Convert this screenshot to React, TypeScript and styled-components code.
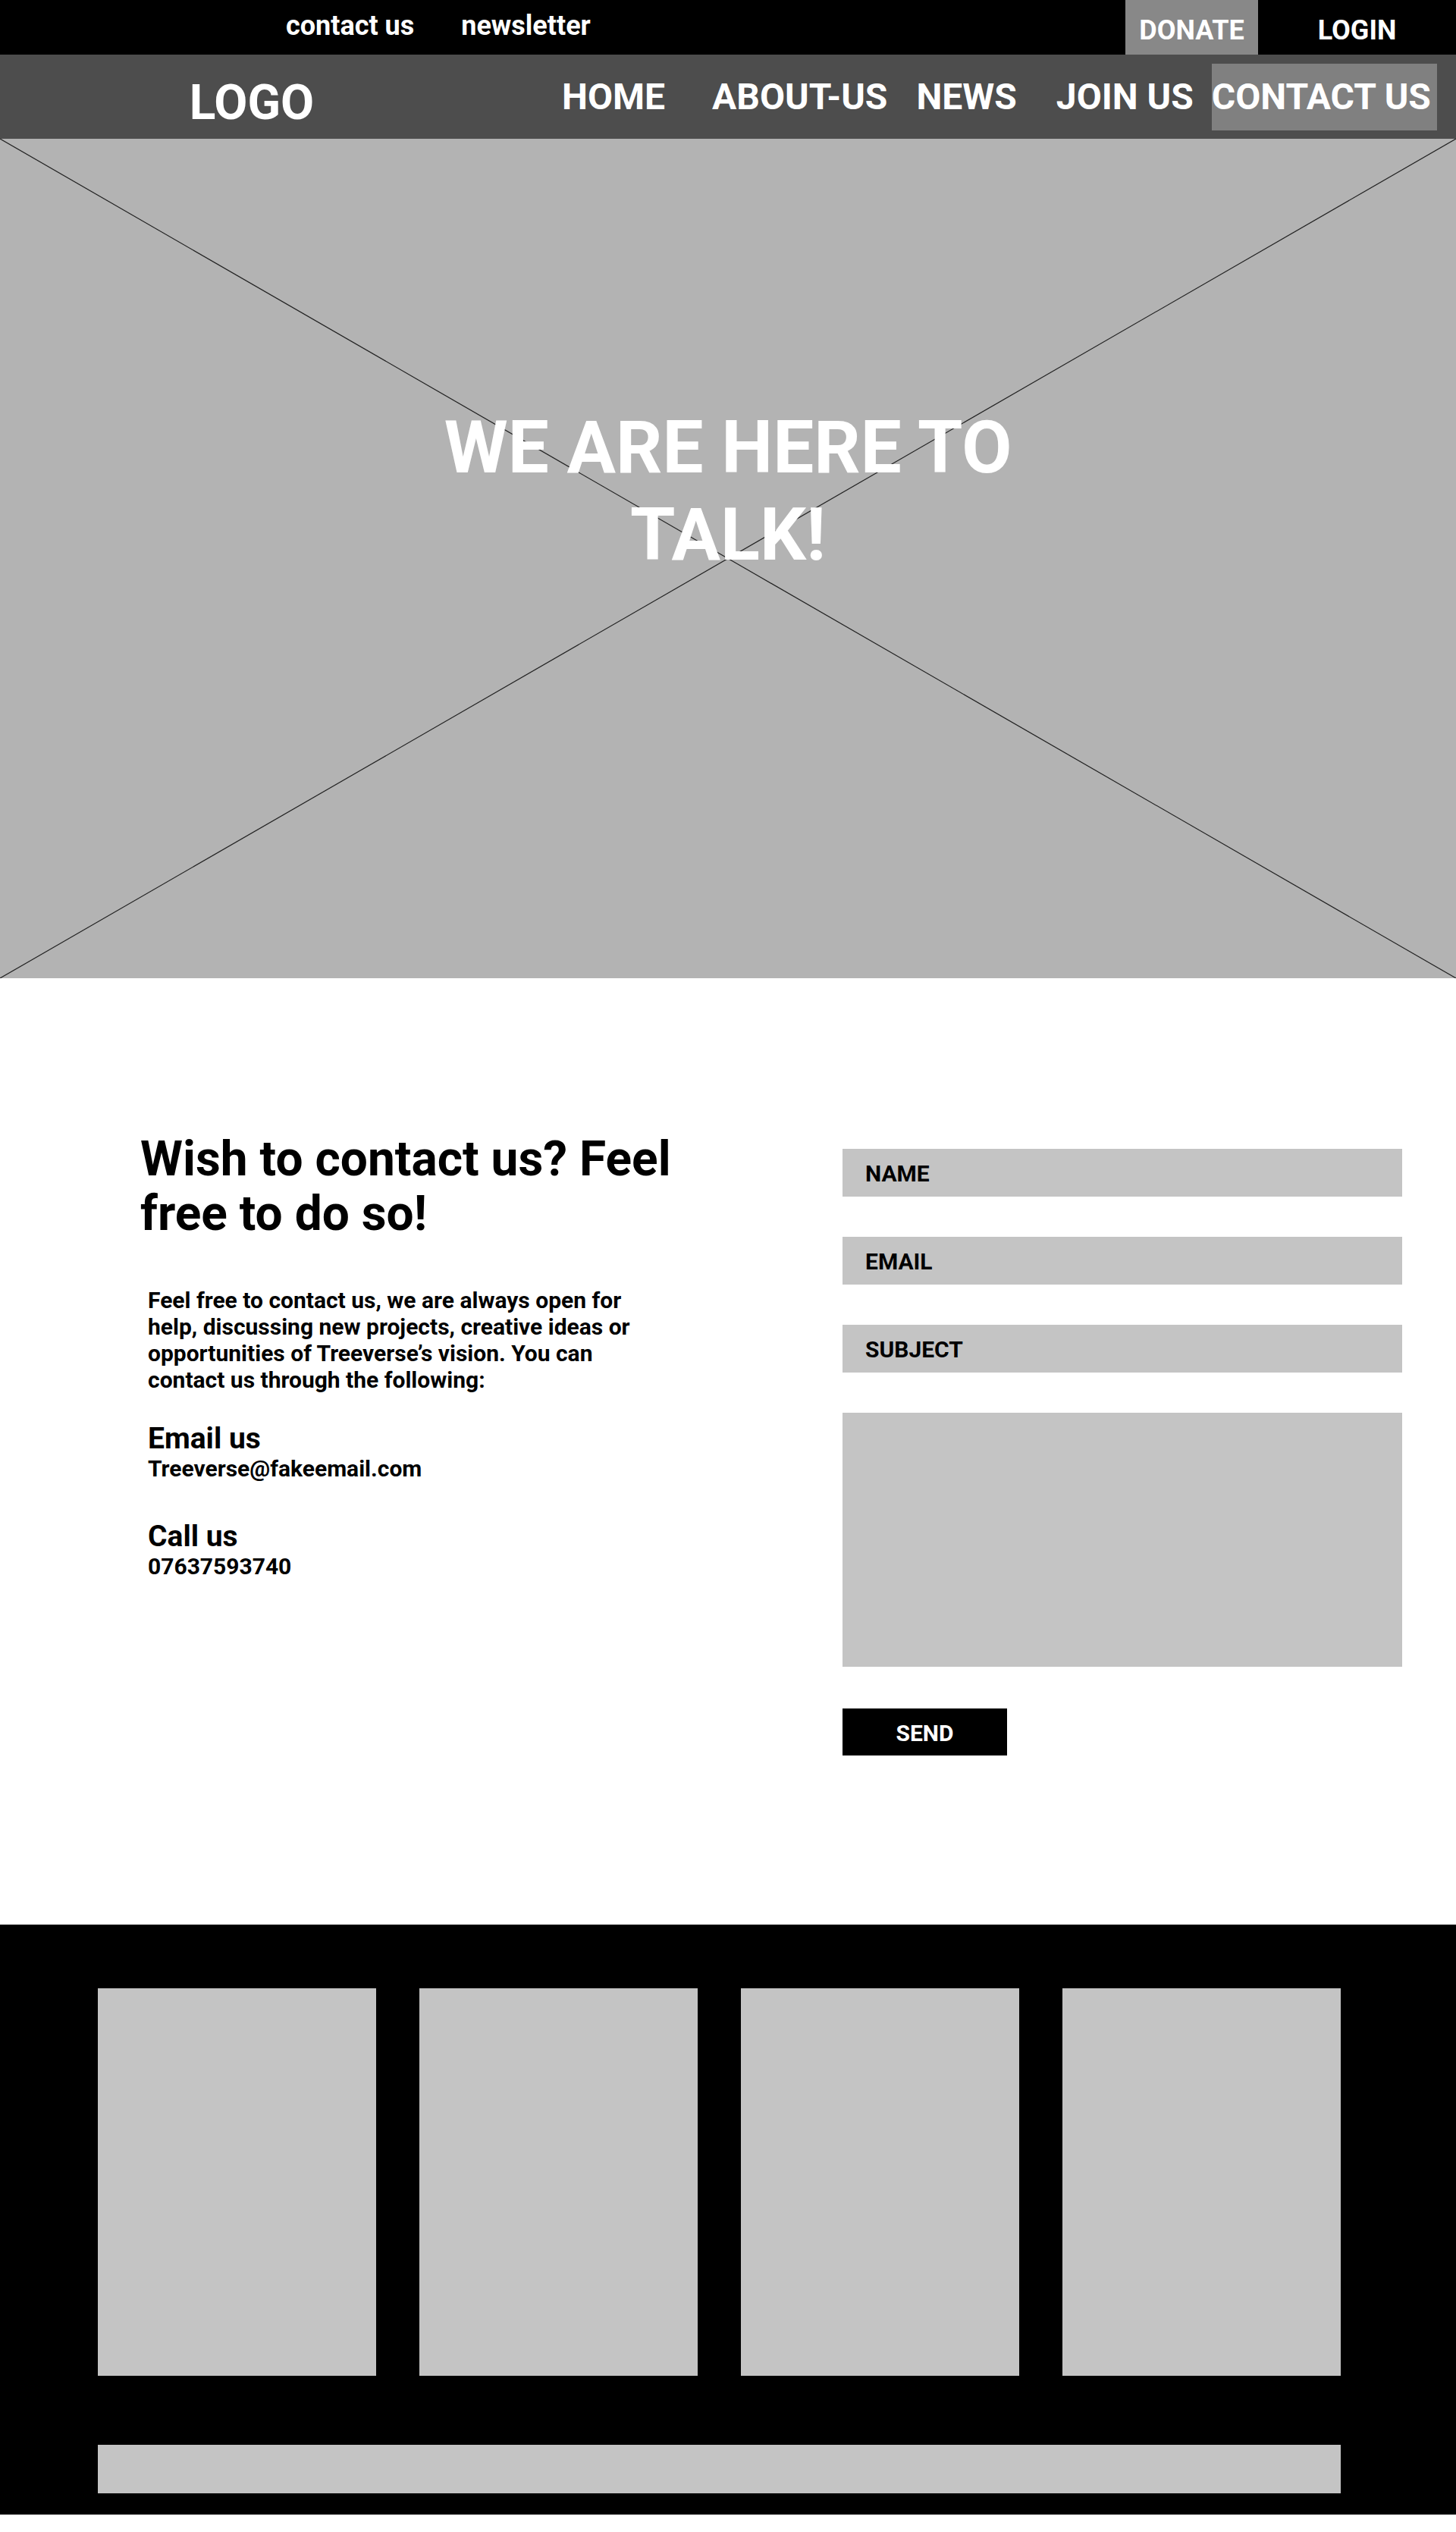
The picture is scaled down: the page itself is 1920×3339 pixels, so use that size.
import React from 'react';
import styled, {createGlobalStyle} from 'styled-components';

const GlobalStyle = createGlobalStyle`
  html, body {
    margin: 0;
    padding: 0;
    background: #fff;
    font-family: Roboto, 'Liberation Sans', Arial, sans-serif;
  }
  * {
    box-sizing: border-box;
  }
`;

const NAV_LINKS = [
  {label: 'HOME', gap: 77},
  {label: 'ABOUT-US', gap: 62},
  {label: 'NEWS', gap: 38},
  {label: 'JOIN US', gap: 52},
];

const FIELDS = ['NAME', 'EMAIL', 'SUBJECT'];

const FOOTER_CARDS = [1, 2, 3, 4];

const TopBar = styled.div`
  display: flex;
  align-items: stretch;
  height: 72px;
  background: #000;
  padding-left: 377px;
`;

const TopLinks = styled.div`
  display: flex;
  gap: 62px;
  align-items: center;
  padding-bottom: 4px;
`;

const TopLink = styled.a`
  color: #fff;
  font-size: 36px;
  font-weight: 700;
  text-decoration: none;
`;

const TopButton = styled.a<{$filled?: boolean; $width: number}>`
  display: flex;
  align-items: center;
  justify-content: center;
  width: ${(p) => p.$width}px;
  padding-top: 7px;
  background: ${(p) => (p.$filled ? '#888888' : 'transparent')};
  color: #fff;
  font-size: 36px;
  font-weight: 700;
  text-decoration: none;
`;

const TopRight = styled.div`
  display: flex;
  margin-left: auto;
`;

const NavBar = styled.nav`
  display: flex;
  align-items: center;
  height: 111px;
  background: #4d4d4d;
`;

const Logo = styled.div`
  width: 664px;
  text-align: center;
  color: #fff;
  font-size: 64px;
  font-weight: 700;
  padding-top: 16px;
`;

const NavLink = styled.a<{$gap: number}>`
  margin-left: ${(p) => p.$gap}px;
  color: #fff;
  font-size: 48px;
  font-weight: 700;
  text-decoration: none;
`;

const NavActive = styled.a`
  display: flex;
  align-items: center;
  height: 88px;
  margin-left: 24px;
  padding: 0 8px 0 0;
  background: #808080;
  color: #fff;
  font-size: 48px;
  font-weight: 700;
  text-decoration: none;
`;

const Hero = styled.section`
  position: relative;
  height: 1107px;
  background: #b3b3b3;
  padding-top: 350px;
  overflow: hidden;
`;

const HeroCross = styled.svg`
  position: absolute;
  inset: 0;
  width: 100%;
  height: 100%;
`;

const HeroTitle = styled.h1`
  position: relative;
  max-width: 820px;
  margin: 0 auto;
  color: #fff;
  font-size: 96px;
  font-weight: 700;
  line-height: 115px;
  text-align: center;
`;

const ContactSection = styled.section`
  display: grid;
  grid-template-columns: 1fr 738px;
  height: 1248px;
  padding: 203px 71px 0 185px;
`;

const InfoColumn = styled.div`
  display: flex;
  flex-direction: column;
`;

const Heading = styled.h2`
  margin: 0;
  max-width: 760px;
  font-size: 64px;
  font-weight: 700;
  line-height: 72px;
`;

const Intro = styled.p`
  margin: 60px 0 0 10px;
  max-width: 660px;
  font-size: 30px;
  font-weight: 700;
  line-height: 35px;
`;

const InfoTitle = styled.h3<{$top: number}>`
  margin: ${(p) => p.$top}px 0 0 10px;
  font-size: 39px;
  font-weight: 700;
  line-height: 44px;
`;

const InfoValue = styled.div`
  margin-left: 10px;
  font-size: 30px;
  font-weight: 700;
  line-height: 35px;
`;

const Form = styled.form`
  display: flex;
  flex-direction: column;
  gap: 53px;
  margin-top: 22px;
`;

const Field = styled.input`
  height: 63px;
  border: none;
  outline: none;
  background: #c4c4c4;
  padding: 2px 0 0 30px;
  font-family: inherit;
  font-size: 30px;
  font-weight: 700;
  color: #000;
  &::placeholder {
    color: #000;
  }
`;

const Message = styled.textarea`
  height: 335px;
  border: none;
  outline: none;
  resize: none;
  background: #c4c4c4;
`;

const SendButton = styled.button`
  width: 217px;
  height: 62px;
  margin-top: 2px;
  border: none;
  background: #000;
  color: #fff;
  font-family: inherit;
  font-size: 30px;
  font-weight: 700;
  padding-top: 4px;
`;

const Footer = styled.footer`
  background: #000;
  padding: 84px 152px 28px 129px;
`;

const CardRow = styled.div`
  display: grid;
  grid-template-columns: repeat(4, 367px);
  gap: 57px;
`;

const Card = styled.div`
  height: 511px;
  background: #c4c4c4;
`;

const BottomBar = styled.div`
  height: 64px;
  margin-top: 91px;
  background: #c4c4c4;
`;

const App: React.FC = () => {
  return (
    <>
      <GlobalStyle />
      <TopBar>
        <TopLinks>
          <TopLink href="#">contact us</TopLink>
          <TopLink href="#">newsletter</TopLink>
        </TopLinks>
        <TopRight>
          <TopButton href="#" $filled $width={175}>
            DONATE
          </TopButton>
          <TopButton href="#" $width={261}>
            LOGIN
          </TopButton>
        </TopRight>
      </TopBar>

      <NavBar>
        <Logo>LOGO</Logo>
        {NAV_LINKS.map((link) => (
          <NavLink key={link.label} href="#" $gap={link.gap}>
            {link.label}
          </NavLink>
        ))}
        <NavActive href="#">CONTACT US</NavActive>
      </NavBar>

      <Hero>
        <HeroCross viewBox="0 0 1920 1107" preserveAspectRatio="none">
          <line x1="0" y1="0" x2="1920" y2="1107" stroke="#222" strokeWidth="1.2" />
          <line x1="1920" y1="0" x2="0" y2="1107" stroke="#222" strokeWidth="1.2" />
        </HeroCross>
        <HeroTitle>WE ARE HERE TO TALK!</HeroTitle>
      </Hero>

      <ContactSection>
        <InfoColumn>
          <Heading>Wish to contact us? Feel free to do so!</Heading>
          <Intro>
            Feel free to contact us, we are always open for help, discussing
            new projects, creative ideas or opportunities of Treeverse’s
            vision. You can contact us through the following:
          </Intro>
          <InfoTitle $top={38}>Email us</InfoTitle>
          <InfoValue>Treeverse@fakeemail.com</InfoValue>
          <InfoTitle $top={50}>Call us</InfoTitle>
          <InfoValue>07637593740</InfoValue>
        </InfoColumn>

        <Form onSubmit={(e) => e.preventDefault()}>
          {FIELDS.map((f) => (
            <Field key={f} placeholder={f} />
          ))}
          <Message />
          <SendButton type="submit">SEND</SendButton>
        </Form>
      </ContactSection>

      <Footer>
        <CardRow>
          {FOOTER_CARDS.map((c) => (
            <Card key={c} />
          ))}
        </CardRow>
        <BottomBar />
      </Footer>
    </>
  );
};

export default App;
